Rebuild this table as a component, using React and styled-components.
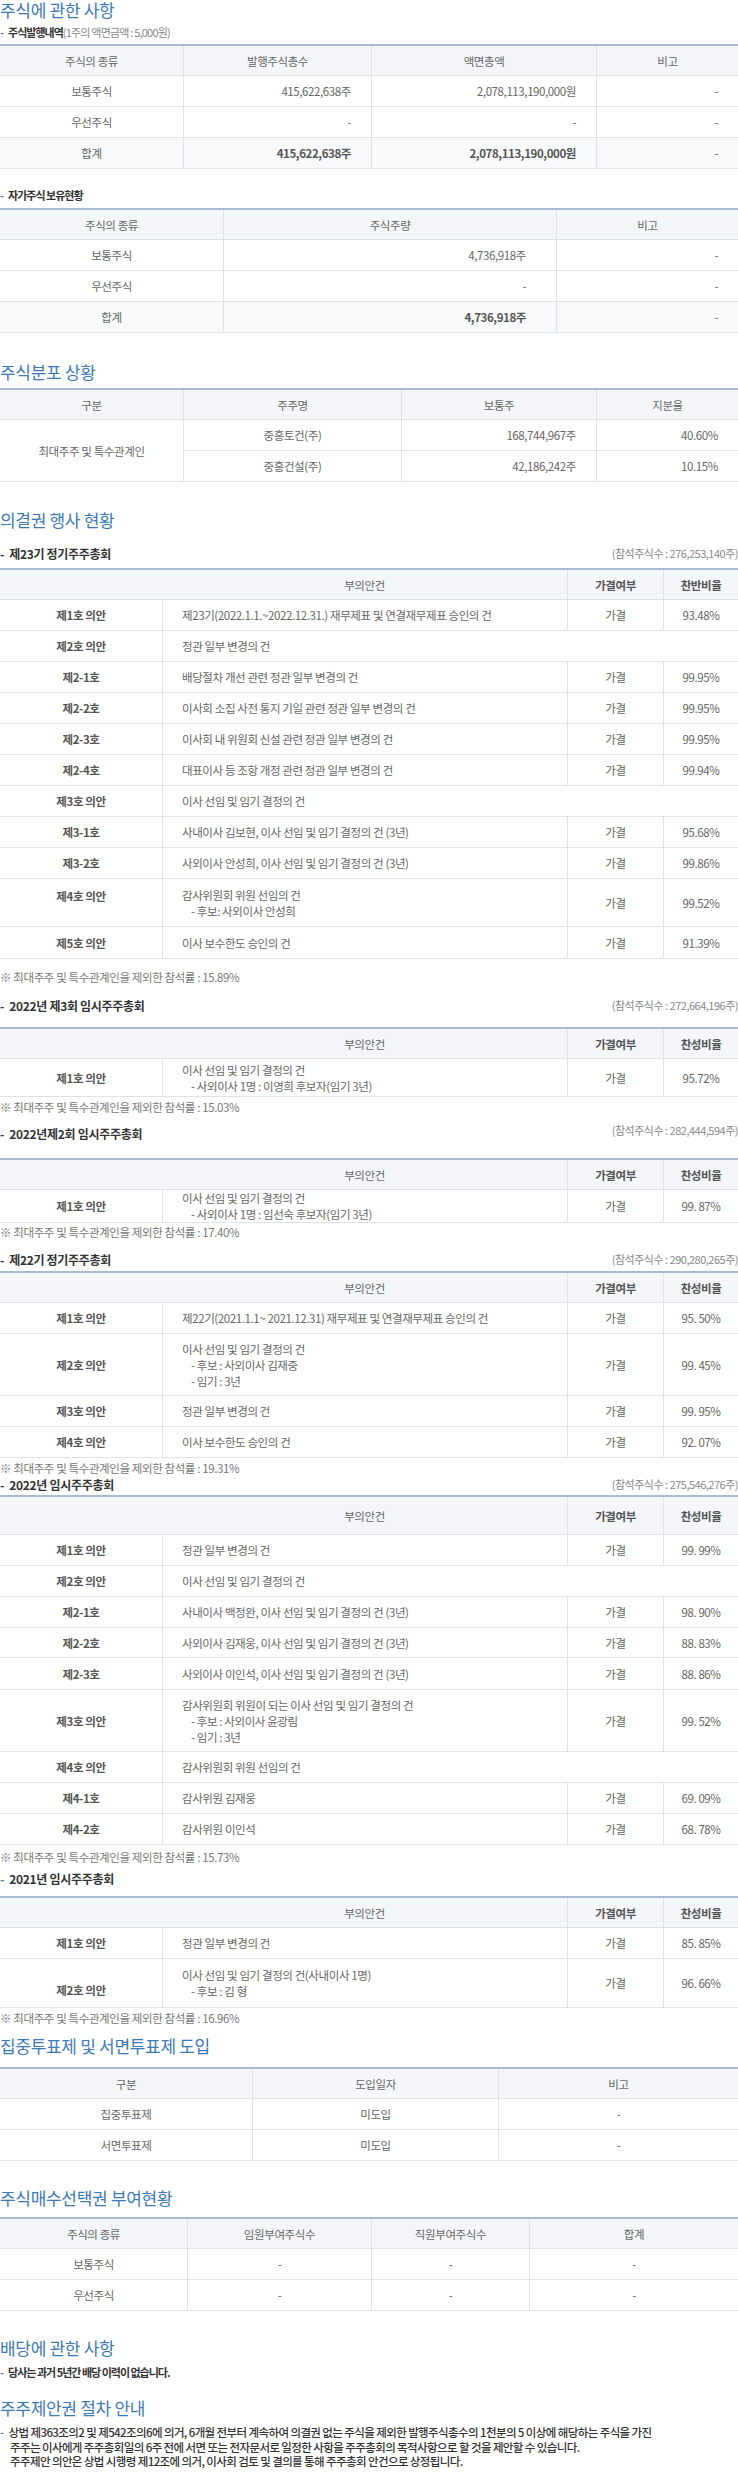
import React from 'react';
import styled, { createGlobalStyle } from 'styled-components';

const GlobalStyle = createGlobalStyle`
  body {
    margin: 0;
    background: #fff;
    font-family: "Noto Sans CJK KR", "Noto Sans", sans-serif;
    color: #666;
  }
`;

const Page = styled.div`
  width: 738px;
  padding-bottom: 16px;
`;

const Title = styled.h2`
  margin: ${(p) => p.$mt || 0}px 0 0;
  height: 20px;
  line-height: 20px;
  font-size: 17px;
  font-weight: 400;
  color: #3d79b6;
  letter-spacing: -0.3px;
`;

const SubRow = styled.div`
  display: flex;
  justify-content: space-between;
  align-items: center;
  height: 16px;
  margin-top: ${(p) => p.$mt || 0}px;
`;

const SubTitle = styled.div`
  font-size: ${(p) => (p.$big ? 12 : 11)}px;
  font-weight: 700;
  color: #333;
  letter-spacing: ${(p) => (p.$big ? -0.3 : -1)}px;
  white-space: nowrap;
`;

const Dash = styled.span`
  color: ${(p) => (p.$blue ? '#5a7fab' : '#333')};
  margin-right: 5px;
`;

const SubNote = styled.span`
  font-weight: 400;
  color: #888;
  letter-spacing: -0.8px;
`;

const Attend = styled.div`
  font-size: 11px;
  color: #888;
  letter-spacing: -0.5px;
  margin-top: ${(p) => (p.$up ? -6 : 0)}px;
`;

const Note = styled.div`
  height: 16px;
  line-height: 16px;
  margin-top: ${(p) => p.$mt || 0}px;
  font-size: 11.5px;
  color: #777;
  letter-spacing: -0.4px;
`;

const Grid = styled.div`
  display: grid;
  grid-template-columns: ${(p) => p.$cols};
  grid-template-rows: ${(p) => p.$rows};
  border-top: 2px solid #a9bbd4;
  margin-top: ${(p) => p.$mt || 0}px;
`;

const Cell = styled.div`
  display: flex;
  align-items: ${(p) => (p.$v === 'start' ? 'flex-start' : p.$v === 'end' ? 'flex-end' : 'center')};
  justify-content: ${(p) =>
    p.$align === 'right' ? 'flex-end' : p.$align === 'left' ? 'flex-start' : 'center'};
  padding: ${(p) => (p.$v === 'start' ? 9 : 0)}px ${(p) => p.$pad || 0}px
    ${(p) => (p.$v === 'end' ? 9 : 0)}px;
  line-height: 16px;
  border-bottom: 1px solid #dde3ec;
  border-left: ${(p) => (p.$first ? 'none' : '1px solid #dde3ec')};
  background: ${(p) => (p.$head ? '#f4f6fa' : p.$total ? '#f8f9fb' : '#fff')};
  font-size: 11.5px;
  color: ${(p) => (p.$bold ? '#555' : '#666')};
  font-weight: ${(p) => (p.$bold ? 700 : 400)};
  letter-spacing: -0.4px;
  white-space: nowrap;
  grid-column: ${(p) => (p.$span ? `span ${p.$span}` : 'auto')};
  grid-row: ${(p) => (p.$rspan ? `span ${p.$rspan}` : 'auto')};
`;

const TextCell = styled(Cell)`
  flex-direction: column;
  align-items: flex-start;
  justify-content: center;
  padding: 0 0 0 19px;
`;

const Line = styled.div`
  padding-left: ${(p) => (p.$sub ? 9 : 0)}px;
`;

const Para = styled.div`
  margin-top: ${(p) => p.$mt || 0}px;
  font-size: 11.5px;
  line-height: 14.5px;
  font-weight: 500;
  color: #333;
  letter-spacing: -0.6px;
  white-space: nowrap;
`;

const ParaLine = styled.div`
  padding-left: ${(p) => (p.$indent ? 10 : 0)}px;
`;

const Sub = ({ mt, blue, big, children, note, attend, up }) => (
  <SubRow $mt={mt}>
    <SubTitle $big={big}>
      <Dash $blue={blue}>-</Dash>
      {children}
      {note && <SubNote>{note}</SubNote>}
    </SubTitle>
    {attend && <Attend $up={up}>(참석주식수 : {attend})</Attend>}
  </SubRow>
);

const rowsOf = (hs) => hs.map((h) => `${h}px`).join(' ');

const StockTable = ({ mt, cols, head, rows, pads }) => (
  <Grid $mt={mt} $cols={cols} $rows={rowsOf([30, ...rows.map(() => 31)])}>
    {head.map((h, i) => (
      <Cell key={h} $head $first={i === 0}>
        {h}
      </Cell>
    ))}
    {rows.map((r, ri) =>
      r.cells.map((c, i) => (
        <Cell
          key={`${ri}-${i}`}
          $first={i === 0}
          $total={r.total}
          $bold={r.total && i > 0 && c !== '-'}
          $align={i === 0 ? 'center' : pads[i] ? 'right' : 'center'}
          $pad={pads[i]}
        >
          {c}
        </Cell>
      ))
    )}
  </Grid>
);

const AgendaTable = ({ mt, rateLabel = '찬성비율', head = 30, rows }) => (
  <Grid $mt={mt} $cols="162px 405px 96px 75px" $rows={rowsOf([head, ...rows.map((r) => r.h || 31)])}>
    <Cell $head $first />
    <Cell $head $first>
      부의안건
    </Cell>
    <Cell $head $bold>
      가결여부
    </Cell>
    <Cell $head $bold>
      {rateLabel}
    </Cell>
    {rows.map((r) => {
      const lines = Array.isArray(r.text) ? r.text : [r.text];
      return (
        <React.Fragment key={r.label + lines[0]}>
          <Cell $first $bold $v={r.v}>
            {r.label}
          </Cell>
          <TextCell $span={r.result ? 1 : 3}>
            {lines.map((l, i) => (
              <Line key={l} $sub={i > 0}>
                {l}
              </Line>
            ))}
          </TextCell>
          {r.result && <Cell>{r.result}</Cell>}
          {r.result && <Cell>{r.rate}</Cell>}
        </React.Fragment>
      );
    })}
  </Grid>
);

const agm23 = [
  { label: '제1호 의안', text: '제23기(2022.1.1.~2022.12.31.) 재무제표 및 연결재무제표 승인의 건', result: '가결', rate: '93.48%' },
  { label: '제2호 의안', text: '정관 일부 변경의 건' },
  { label: '제2-1호', text: '배당절차 개선 관련 정관 일부 변경의 건', result: '가결', rate: '99.95%' },
  { label: '제2-2호', text: '이사회 소집 사전 통지 기일 관련 정관 일부 변경의 건', result: '가결', rate: '99.95%' },
  { label: '제2-3호', text: '이사회 내 위원회 신설 관련 정관 일부 변경의 건', result: '가결', rate: '99.95%' },
  { label: '제2-4호', text: '대표이사 등 조항 개정 관련 정관 일부 변경의 건', result: '가결', rate: '99.94%' },
  { label: '제3호 의안', text: '이사 선임 및 임기 결정의 건' },
  { label: '제3-1호', text: '사내이사 김보현, 이사 선임 및 임기 결정의 건 (3년)', result: '가결', rate: '95.68%' },
  { label: '제3-2호', text: '사외이사 안성희, 이사 선임 및 임기 결정의 건 (3년)', result: '가결', rate: '99.86%' },
  { label: '제4호 의안', text: ['감사위원회 위원 선임의 건', '- 후보: 사외이사 안성희'], result: '가결', rate: '99.52%', h: 48, v: 'start' },
  { label: '제5호 의안', text: '이사 보수한도 승인의 건', result: '가결', rate: '91.39%', h: 32 },
];

const egm3 = [
  { label: '제1호 의안', text: ['이사 선임 및 임기 결정의 건', '- 사외이사 1명 : 이영희 후보자(임기 3년)'], result: '가결', rate: '95.72%', h: 38 },
];

const egm2 = [
  { label: '제1호 의안', text: ['이사 선임 및 임기 결정의 건', '- 사외이사 1명 : 임선숙 후보자(임기 3년)'], result: '가결', rate: '99. 87%', h: 33 },
];

const agm22 = [
  { label: '제1호 의안', text: '제22기(2021.1.1~ 2021.12.31) 재무제표 및 연결재무제표 승인의 건', result: '가결', rate: '95. 50%' },
  { label: '제2호 의안', text: ['이사 선임 및 임기 결정의 건', '- 후보 : 사외이사 김재중', '- 임기 : 3년'], result: '가결', rate: '99. 45%', h: 62 },
  { label: '제3호 의안', text: '정관 일부 변경의 건', result: '가결', rate: '99. 95%' },
  { label: '제4호 의안', text: '이사 보수한도 승인의 건', result: '가결', rate: '92. 07%' },
];

const egm2022 = [
  { label: '제1호 의안', text: '정관 일부 변경의 건', result: '가결', rate: '99. 99%' },
  { label: '제2호 의안', text: '이사 선임 및 임기 결정의 건' },
  { label: '제2-1호', text: '사내이사 백정완, 이사 선임 및 임기 결정의 건 (3년)', result: '가결', rate: '98. 90%' },
  { label: '제2-2호', text: '사외이사 김재웅, 이사 선임 및 임기 결정의 건 (3년)', result: '가결', rate: '88. 83%', h: 30 },
  { label: '제2-3호', text: '사외이사 이인석, 이사 선임 및 임기 결정의 건 (3년)', result: '가결', rate: '88. 86%', h: 32 },
  { label: '제3호 의안', text: ['감사위원회 위원이 되는 이사 선임 및 임기 결정의 건', '- 후보 : 사외이사 윤광림', '- 임기 : 3년'], result: '가결', rate: '99. 52%', h: 62 },
  { label: '제4호 의안', text: '감사위원회 위원 선임의 건' },
  { label: '제4-1호', text: '감사위원 김재웅', result: '가결', rate: '69. 09%' },
  { label: '제4-2호', text: '감사위원 이인석', result: '가결', rate: '68. 78%' },
];

const egm2021 = [
  { label: '제1호 의안', text: '정관 일부 변경의 건', result: '가결', rate: '85. 85%' },
  { label: '제2호 의안', text: ['이사 선임 및 임기 결정의 건(사내이사 1명)', '- 후보 : 김 형'], result: '가결', rate: '96. 66%', h: 49, v: 'end' },
];

const App = () => (
  <Page>
    <GlobalStyle />
    <Title>주식에 관한 사항</Title>
    <Sub mt={4} blue note="(1주의 액면금액 : 5,000원)">
      주식발행내역
    </Sub>
    <StockTable
      mt={4}
      cols="183px 188px 225px 142px"
      head={['주식의 종류', '발행주식총수', '액면총액', '비고']}
      pads={[0, 20, 20, 20]}
      rows={[
        { cells: ['보통주식', '415,622,638주', '2,078,113,190,000원', '-'] },
        { cells: ['우선주식', '-', '-', '-'] },
        { cells: ['합계', '415,622,638주', '2,078,113,190,000원', '-'], total: true },
      ]}
    />
    <Sub mt={18} blue>
      자가주식 보유현황
    </Sub>
    <StockTable
      mt={5}
      cols="223px 333px 182px"
      head={['주식의 종류', '주식주량', '비고']}
      pads={[0, 30, 20]}
      rows={[
        { cells: ['보통주식', '4,736,918주', '-'] },
        { cells: ['우선주식', '-', '-'] },
        { cells: ['합계', '4,736,918주', '-'], total: true },
      ]}
    />

    <Title $mt={29}>주식분포 상황</Title>
    <Grid $mt={6} $cols="183px 218px 195px 142px" $rows="30px 31px 31px">
      <Cell $head $first>구분</Cell>
      <Cell $head>주주명</Cell>
      <Cell $head>보통주</Cell>
      <Cell $head>지분율</Cell>
      <Cell $first $rspan={2}>최대주주 및 특수관계인</Cell>
      <Cell>중흥토건(주)</Cell>
      <Cell $align="right" $pad={20}>168,744,967주</Cell>
      <Cell $align="right" $pad={20}>40.60%</Cell>
      <Cell>중흥건설(주)</Cell>
      <Cell $align="right" $pad={20}>42,186,242주</Cell>
      <Cell $align="right" $pad={20}>10.15%</Cell>
    </Grid>

    <Title $mt={28}>의결권 행사 현황</Title>
    <Sub mt={15} big attend="276,253,140주">
      제23기 정기주주총회
    </Sub>
    <AgendaTable mt={7} rateLabel="찬반비율" rows={agm23} />
    <Note $mt={10}>※ 최대주주 및 특수관계인을 제외한 참석률 : 15.89%</Note>

    <Sub mt={12} big attend="272,664,196주">
      2022년 제3회 임시주주총회
    </Sub>
    <AgendaTable mt={14} rows={egm3} />
    <Note $mt={2}>※ 최대주주 및 특수관계인을 제외한 참석률 : 15.03%</Note>

    <Sub mt={10} big attend="282,444,594주" up>
      2022년제2회 임시주주총회
    </Sub>
    <AgendaTable mt={17} rows={egm2} />
    <Note $mt={1}>※ 최대주주 및 특수관계인을 제외한 참석률 : 17.40%</Note>

    <Sub mt={11} big attend="290,280,265주">
      제22기 정기주주총회
    </Sub>
    <AgendaTable mt={4} rows={agm22} />
    <Note $mt={2}>※ 최대주주 및 특수관계인을 제외한 참석률 : 19.31%</Note>

    <Sub mt={0} big attend="275,546,276주">
      2022년 임시주주총회
    </Sub>
    <AgendaTable mt={3} head={38} rows={egm2022} />
    <Note $mt={4}>※ 최대주주 및 특수관계인을 제외한 참석률 : 15.73%</Note>

    <Sub mt={5} big blue>
      2021년 임시주주총회
    </Sub>
    <AgendaTable mt={10} rows={egm2021} />
    <Note $mt={2}>※ 최대주주 및 특수관계인을 제외한 참석률 : 16.96%</Note>

    <Title $mt={10}>집중투표제 및 서면투표제 도입</Title>
    <StockTable
      mt={11}
      cols="252px 246px 240px"
      head={['구분', '도입일자', '비고']}
      pads={[0, 0, 0]}
      rows={[{ cells: ['집중투표제', '미도입', '-'] }, { cells: ['서면투표제', '미도입', '-'] }]}
    />

    <Title $mt={27}>주식매수선택권 부여현황</Title>
    <StockTable
      mt={9}
      cols="187px 184px 158px 209px"
      head={['주식의 종류', '임원부여주식수', '직원부여주식수', '합계']}
      pads={[0, 0, 0, 0]}
      rows={[{ cells: ['보통주식', '-', '-', '-'] }, { cells: ['우선주식', '-', '-', '-'] }]}
    />

    <Title $mt={27}>배당에 관한 사항</Title>
    <Sub mt={6} blue>
      당사는 과거 5년간 배당 이력이 없습니다.
    </Sub>

    <Title $mt={18}>주주제안권 절차 안내</Title>
    <Para $mt={7}>
      <ParaLine>
        <Dash $blue>-</Dash>
        상법 제363조의2 및 제542조의6에 의거, 6개월 전부터 계속하여 의결권 없는 주식을 제외한 발행주식총수의 1천분의 5 이상에 해당하는 주식을 가진
      </ParaLine>
      <ParaLine $indent>
        주주는 이사에게 주주총회일의 6주 전에 서면 또는 전자문서로 일정한 사항을 주주총회의 목적사항으로 할 것을 제안할 수 있습니다.
      </ParaLine>
      <ParaLine $indent>
        주주제안 의안은 상법 시행령 제12조에 의거, 이사회 검토 및 결의를 통해 주주총회 안건으로 상정됩니다.
      </ParaLine>
    </Para>
  </Page>
);

export default App;
